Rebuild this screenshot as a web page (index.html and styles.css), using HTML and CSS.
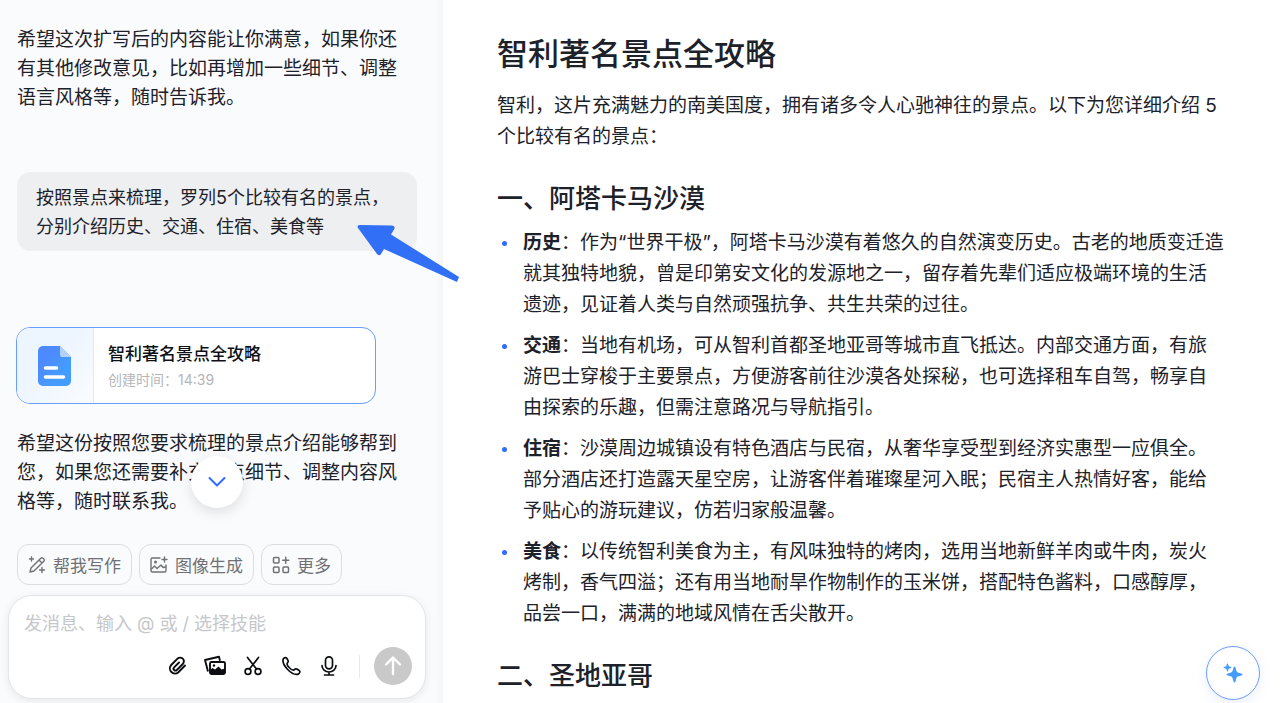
FILE: index.html
```html
<!DOCTYPE html>
<html lang="zh-CN">
<head>
    <meta charset="UTF-8">
    <title>智利著名景点全攻略</title>
    <link rel="stylesheet" href="styles.css">
</head>
<body>
    <div class="app">
        <section class="chat">
            <div class="messages">
                <p class="reply">希望这次扩写后的内容能让你满意，如果你还有其他修改意见，比如再增加一些细节、调整语言风格等，随时告诉我。</p>
                <p class="bubble">按照景点来梳理，罗列5个比较有名的景点，分别介绍历史、交通、住宿、美食等</p>
                <a class="doc-card" href="#doc">
                    <span class="doc-thumb">
                        <svg width="34" height="40" viewBox="0 0 34 40">
                            <defs>
                                <linearGradient id="docFill" x1="0" y1="0" x2="1" y2="1">
                                    <stop offset="0.3" stop-color="#4d8aff"/>
                                    <stop offset="0.7" stop-color="#439dff"/>
                                </linearGradient>
                            </defs>
                            <path d="M5 0h17l11 11v24a5 5 0 0 1-5 5H5a5 5 0 0 1-5-5V5a5 5 0 0 1 5-5z" fill="url(#docFill)"/>
                            <path d="M22 0l11 11h-9a2 2 0 0 1-2-2z" fill="#b5d2ff"/>
                            <path d="M7.500 22h11M7.500 31h18" stroke="#fff" stroke-width="3.600" stroke-linecap="round"/>
                        </svg>
                    </span>
                    <span class="doc-info">
                        <strong class="doc-name">智利著名景点全攻略</strong>
                        <span class="doc-time">创建时间：14:39</span>
                    </span>
                </a>
                <p class="reply">希望这份按照您要求梳理的景点介绍能够帮到您，如果您还需要补充景点细节、调整内容风格等，随时联系我。</p>
            </div>

            <div class="footer">
                <button class="scroll-down" aria-label="滚动到底部">
                    <svg width="20" height="12" viewBox="0 0 20 12" fill="none" stroke="#2f6bff" stroke-width="2" stroke-linecap="round" stroke-linejoin="round"><path d="M2.500 2l7.500 7.500L17.500 2"/></svg>
                </button>
                <div class="skills">
                    <button class="skill">
                        <svg width="18" height="18" viewBox="0 0 18 18" fill="none" stroke="currentColor" stroke-width="1.400" stroke-linecap="round" stroke-linejoin="round">
                            <path d="M2 16l1-4L12.800 2.200a1.500 1.500 0 0 1 2.200 0l.8.8a1.500 1.500 0 0 1 0 2.200L6 15zM11 4l3 3"/>
                            <path d="M3.500 1v4M1.500 3h4M14 11.500v5M11.500 14h5"/>
                        </svg>
                        帮我写作
                    </button>
                    <button class="skill">
                        <svg width="18" height="18" viewBox="0 0 18 18" fill="none" stroke="currentColor" stroke-width="1.400" stroke-linecap="round" stroke-linejoin="round">
                            <path d="M10 2H2.500A1.500 1.500 0 0 0 1 3.500v11A1.500 1.500 0 0 0 2.500 16h12a1.500 1.500 0 0 0 1.500-1.500V9"/>
                            <path d="M1.500 13l3-3 2.500 2.500L11 9l2 2.500 2.500-.5M14.500 1v5M12 3.500h5"/>
                            <circle cx="5.500" cy="6" r="0.800"/>
                        </svg>
                        图像生成
                    </button>
                    <button class="skill">
                        <svg width="18" height="18" viewBox="0 0 18 18" fill="none" stroke="currentColor" stroke-width="1.500" stroke-linecap="round" stroke-linejoin="round">
                            <rect x="1.500" y="1.500" width="5.500" height="5.500" rx="1"/>
                            <rect x="1.500" y="11" width="5.500" height="5.500" rx="1"/>
                            <rect x="11" y="11" width="5.500" height="5.500" rx="1"/>
                            <path d="M13.700 1.200v6M10.700 4.200h6"/>
                        </svg>
                        更多
                    </button>
                </div>
                <div class="composer">
                    <input class="composer-input" type="text" placeholder="发消息、输入 @ 或 / 选择技能" aria-label="发消息">
                    <div class="tools">
                        <button class="tool" aria-label="附件">
                            <svg width="24" height="24" viewBox="0 0 24 24" fill="none" stroke="currentColor" stroke-width="1.900" stroke-linecap="round"><path d="M20 11.500l-6.600 6.700a5.100 5.100 0 0 1-7.200-7.200l6.300-6.300a3.700 3.700 0 0 1 5.300 5.300l-6 6a1.900 1.900 0 0 1-2.700-2.700L14 8.500"/></svg>
                        </button>
                        <button class="tool" aria-label="图片">
                            <svg width="24" height="24" viewBox="0 0 24 24" fill="none" stroke="currentColor" stroke-width="1.900" stroke-linejoin="round">
                                <path d="M5 17.500L2 6l14-3.200 1 4"/>
                                <rect x="7" y="8" width="15" height="12" rx="1.500"/>
                                <path d="M7 16l2.500-2 2.500 1.500 3.500-3 3 3 3.500-1V20H7z" fill="currentColor" stroke="none"/>
                                <circle cx="11" cy="11.500" r="1.200" fill="currentColor" stroke="none"/>
                            </svg>
                        </button>
                        <button class="tool" aria-label="截图">
                            <svg width="24" height="24" viewBox="0 0 24 24" fill="none" stroke="currentColor" stroke-width="1.700" stroke-linecap="round">
                                <circle cx="7" cy="17.500" r="2.900"/>
                                <circle cx="17" cy="17.500" r="2.900"/>
                                <path d="M6.500 3.500L15.500 15M17.500 3.500L8.500 15"/>
                            </svg>
                        </button>
                        <button class="tool" aria-label="通话">
                            <svg width="24" height="24" viewBox="0 0 24 24" fill="none" stroke="currentColor" stroke-width="1.700" stroke-linejoin="round"><path d="M4 5.500C4.500 4.500 5.700 3.500 6.700 3.600c1.100.2 2.500 2.900 2.500 4 0 1-1.200 1.400-1.200 2.400 0 1.800 4.300 6.200 6.200 6.200 1 0 1.400-1.400 2.500-1.400 1.200 0 4.100 1.600 4.200 2.800.1 1.100-1.400 2.600-2.700 2.800C12.500 21 3.200 11.700 4 5.500z"/></svg>
                        </button>
                        <button class="tool" aria-label="语音">
                            <svg width="24" height="24" viewBox="0 0 24 24" fill="none" stroke="currentColor" stroke-width="1.700" stroke-linecap="round">
                                <rect x="8.500" y="2.800" width="7" height="12" rx="3.500"/>
                                <path d="M5 11.500a7 6.500 0 0 0 14 0M12 18v3M7.500 21h9"/>
                            </svg>
                        </button>
                        <span class="divider"></span>
                        <button class="send" aria-label="发送">
                            <svg width="24" height="24" viewBox="0 0 24 24" fill="none" stroke="#fff" stroke-width="2.400" stroke-linecap="round" stroke-linejoin="round"><path d="M12 20V4M5 10.500L12 3.500l7 7"/></svg>
                        </button>
                    </div>
                </div>
            </div>
        </section>

        <article class="doc" id="doc">
            <h1>智利著名景点全攻略</h1>
            <p>智利，这片充满魅力的南美国度，拥有诸多令人心驰神往的景点。以下为您详细介绍 5 个比较有名的景点：</p>
            <h2>一、阿塔卡马沙漠</h2>
            <ul>
                <li><b>历史</b>：作为“世界干极”，阿塔卡马沙漠有着悠久的自然演变历史。古老的地质变迁造就其独特地貌，曾是印第安文化的发源地之一，留存着先辈们适应极端环境的生活遗迹，见证着人类与自然顽强抗争、共生共荣的过往。</li>
                <li><b>交通</b>：当地有机场，可从智利首都圣地亚哥等城市直飞抵达。内部交通方面，有旅游巴士穿梭于主要景点，方便游客前往沙漠各处探秘，也可选择租车自驾，畅享自由探索的乐趣，但需注意路况与导航指引。</li>
                <li><b>住宿</b>：沙漠周边城镇设有特色酒店与民宿，从奢华享受型到经济实惠型一应俱全。部分酒店还打造露天星空房，让游客伴着璀璨星河入眠；民宿主人热情好客，能给予贴心的游玩建议，仿若归家般温馨。</li>
                <li><b>美食</b>：以传统智利美食为主，有风味独特的烤肉，选用当地新鲜羊肉或牛肉，炭火烤制，香气四溢；还有用当地耐旱作物制作的玉米饼，搭配特色酱料，口感醇厚，品尝一口，满满的地域风情在舌尖散开。</li>
            </ul>
            <h2>二、圣地亚哥</h2>
        </article>

        <svg class="pointer" width="104" height="60" viewBox="0 0 104 60"><path d="M3 0l32 .5q4 .5 2 4l-3 5L102 52l-2 5L27 24l-3 5q-1.500 2.500-4 0L1 3q-1.500-3 2-3z" fill="#316ff6"/></svg>

        <button class="ai-button" aria-label="AI 助手">
            <svg width="24" height="24" viewBox="0 0 24 24" fill="#439dff">
                <path d="M13.500 5.500q1 0 1.300 2c.7 3.500 1.200 4 4.700 4.700q2 .3 2 1.300t-2 1.300c-3.500.7-4 1.200-4.700 4.700q-.3 2-1.300 2t-1.300-2c-.7-3.500-1.200-4-4.700-4.700q-2-.3-2-1.300t2-1.300c3.500-.7 4-1.200 4.700-4.700q.3-2 1.300-2z"/>
                <path d="M6.500 2.500q.6 0 .8 1.200c.3 1.500.5 1.700 2 2q1.200.2 1.200.8t-1.200.8c-1.500.3-1.700.5-2 2q-.2 1.200-.8 1.200t-.8-1.200c-.3-1.500-.5-1.700-2-2q-1.200-.2-1.200-.8t1.200-.8c1.500-.3 1.700-.5 2-2q.2-1.200.8-1.200z"/>
            </svg>
        </button>
    </div>
</body>
</html>
```
FILE: styles.css
```css
* { box-sizing: border-box; }
body { margin: 0; font-family: Inter, "Noto Sans CJK SC", sans-serif; font-size: 19px; color: #1d2129; background: #fff; text-autospace: no-autospace; text-spacing-trim: space-all; }
p, h1, h2, ul { margin: 0; padding: 0; }
button { font: inherit; padding: 0; border: none; background: none; cursor: pointer; }
svg { display: block; flex: none; }
.app { position: relative; display: grid; grid-template-columns: 443px 1fr; height: 100vh; overflow: hidden; }

/* chat */
.chat { display: flex; flex-direction: column; min-height: 0; background: linear-gradient(to left, #f5f6f8, #fafbfd 8px); }
.messages { flex: 1; min-height: 0; overflow: hidden; padding: 25px 26px 0 17px; }
.reply { padding-right: 10px; line-height: 29px; }
.bubble { margin: 60px 0 76px; padding: 11px 19px 10px; border-radius: 14px; background: #eeeff1; font-size: 18px; line-height: 29px; }
.doc-card { display: flex; width: 360px; height: 77px; margin: 0 0 25px -1px; overflow: hidden; border: 1px solid #6b9cff; border-radius: 14px; background: #fff; color: #0d1117; text-decoration: none; }
.doc-thumb { display: flex; align-items: center; justify-content: center; width: 77px; border-right: 1px solid #e6e8ec; background: linear-gradient(135deg, #edf5ff 40%, #fafcff); }
.doc-info { display: flex; flex-direction: column; gap: 2px; padding: 13px 14px; }
.doc-name { font-size: 17px; font-weight: 500; line-height: 26px; }
.doc-time { font-size: 14px; line-height: 22px; color: #b4b6ba; }

.footer { position: relative; margin: 0 17px 4px 8px; }
.scroll-down { position: absolute; left: 50%; bottom: calc(100% + 36px); display: flex; align-items: center; justify-content: center; width: 52px; height: 52px; margin-left: -26px; border-radius: 50%; background: #fff; box-shadow: 0 4px 14px rgba(0, 0, 0, 0.12); }
.skills { display: flex; gap: 7px; padding-left: 9px; margin-bottom: 10px; }
.skill { display: flex; align-items: center; gap: 7px; height: 41px; padding: 0 10px; border: 1px solid #dcdddf; border-radius: 12px; font-size: 17px; color: #6f7175; }
.composer { padding: 12px 13px 13px; border: 1px solid #e4e5e7; border-radius: 24px; background: #fff; box-shadow: 0 2px 8px rgba(0, 0, 0, 0.08); }
.composer-input { display: block; width: 100%; height: 30px; padding: 0 2px; border: none; outline: none; background: none; font: inherit; font-size: 18px; }
.composer-input::placeholder { color: #c6c7ca; }
.tools { display: flex; align-items: center; justify-content: flex-end; gap: 14px; margin-top: 9px; }
.tool { color: #0b0d12; }
.divider { width: 1px; height: 23px; margin-left: 4px; background: #e8e9eb; }
.send { display: flex; align-items: center; justify-content: center; width: 38px; height: 38px; border-radius: 50%; background: #c9c9ca; }

/* document */
.doc { min-width: 0; overflow: hidden; padding: 33px 55px 0 54px; line-height: 31px; }
.doc h1 { margin-bottom: 15px; font-size: 31px; font-weight: 500; line-height: 42px; }
.doc h2 { margin: 29px 0 10px; font-size: 26px; font-weight: 500; line-height: 36px; }
.doc ul { list-style: none; }
.doc li { position: relative; margin-bottom: 10px; padding-left: 26px; }
.doc li::before { content: ""; position: absolute; left: 5px; top: 14px; width: 5px; height: 5px; border-radius: 50%; background: #2f6bff; }
.doc b { font-weight: 700; }

.pointer { position: absolute; left: 357px; top: 225px; }
.ai-button { position: absolute; right: 20px; bottom: 3px; display: flex; align-items: center; justify-content: center; width: 54px; height: 54px; border: 1px solid #6b9cff; border-radius: 50%; background: #fff; box-shadow: 0 4px 12px rgba(47, 107, 255, 0.1); }
```
